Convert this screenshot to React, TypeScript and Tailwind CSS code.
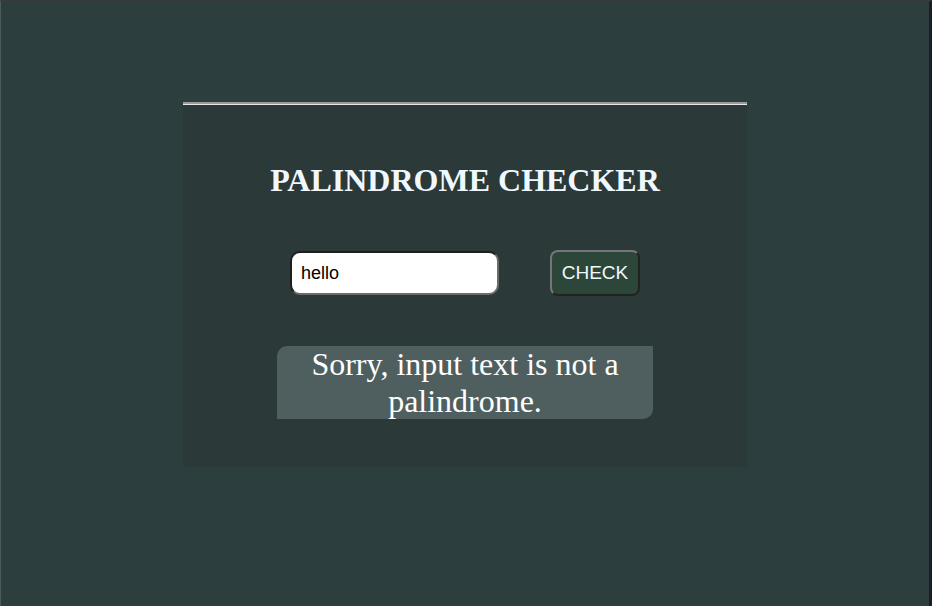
import React, { useState } from "react";

export default function App() {
  const [value, setValue] = useState("hello");
  return (
    <div className="w-[932px] h-[606px] bg-[#2d3e3e] border-t-2 border-t-[#3a3a3a] border-l border-l-[#4b5a5a] border-r-[3px] border-r-[#1c1c26] flex justify-center overflow-hidden">
      <div className="mt-[100px] w-[564px] h-[365px] bg-[#2b3939] flex flex-col items-center">
        <div className="w-full h-[2px] bg-[#9c9c9c]" />
        <div className="w-full h-px bg-[#e8e8e8]" />
        <h1
          className="mt-[57px] text-[32px] font-bold text-[#f0f8ff] leading-[37px]"
          style={{ fontFamily: '"Liberation Serif", "Times New Roman", serif' }}
        >
          PALINDROME CHECKER
        </h1>
        <div className="mt-[51px] flex items-center gap-[51px]">
          <input
            value={value}
            onChange={(e) => setValue(e.target.value)}
            className="w-[209px] h-[44px] bg-white rounded-[10px] border-2 border-t-[#1e1e1e] border-l-[#1e1e1e] border-b-[#6b6b6b] border-r-[#6b6b6b] pl-[9px] text-[18px] text-black outline-none"
            style={{ fontFamily: '"Liberation Sans", Arial, sans-serif' }}
          />
          <button
            className="w-[90px] h-[46px] bg-[#2d463a] rounded-[8px] border-2 border-t-[#767676] border-l-[#767676] border-b-[#222222] border-r-[#222222] text-[19px] text-[#f0f8ff]"
            style={{ fontFamily: '"Liberation Sans", Arial, sans-serif' }}
          >
            CHECK
          </button>
        </div>
        <div
          className="mt-[50px] w-[376px] h-[73px] bg-[#4f5f5f] rounded-tl-[10px] rounded-br-[10px] text-center text-white text-[32px] leading-[36.5px]"
          style={{ fontFamily: '"Liberation Serif", "Times New Roman", serif' }}
        >
          Sorry, input text is not a palindrome.
        </div>
      </div>
    </div>
  );
}
